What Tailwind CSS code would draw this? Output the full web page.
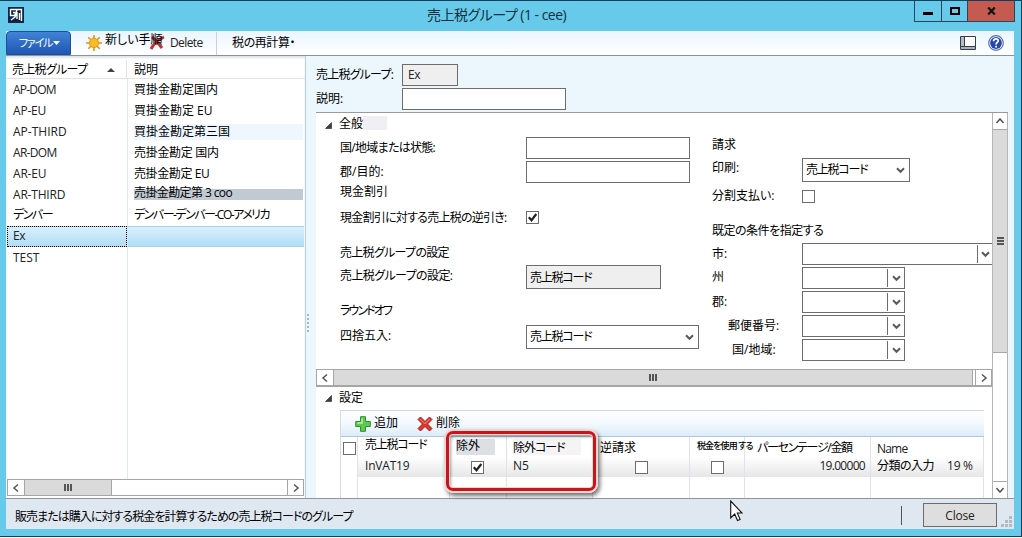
<!DOCTYPE html>
<html lang="ja">

<head>
    <meta charset="UTF-8">
    <meta name="viewport" content="width=device-width, initial-scale=1.0">
    <title>売上税グループ (1 - cee)</title>
    <script src="https://cdn.jsdelivr.net/npm/@tailwindcss/browser@4"></script>
</head>

<body class="w-[1022px] h-[538px] overflow-hidden bg-white text-black text-[12px] leading-[16px] whitespace-nowrap font-['Open_Sans','Noto_Sans_CJK_JP',sans-serif] [font-feature-settings:'palt']">

    <!-- Shared icons -->
    <svg class="hidden">
        <symbol id="drop" viewBox="0 0 9 7"><path d="M1 1.2l3.5 3.6L8 1.2" fill="none" stroke="#5a5a5a" stroke-width="2" /></symbol>
        <symbol id="check" viewBox="0 0 13 13"><path d="M2.8 6.2l2.7 3L10.3 3" fill="none" stroke="#222" stroke-width="2.2" /></symbol>
        <symbol id="left" viewBox="0 0 8 10"><path d="M6 1.5L2 5l4 3.5" fill="none" stroke="#555" stroke-width="1.5" /></symbol>
        <symbol id="right" viewBox="0 0 8 10"><path d="M2 1.5L6 5 2 8.500" fill="none" stroke="#555" stroke-width="1.500" /></symbol>
        <symbol id="fold" viewBox="0 0 7 7"><path d="M6.500 .5v6h-6z" fill="#404040" stroke="#222" stroke-width=".6" /></symbol>
    </svg>

    <div class="relative flex flex-col w-[1022px] h-[537px] bg-[#67caea] border-t border-r border-b border-[#123f5c] pl-[6px] pr-[7px] pb-[7px]">

        <!-- Title bar -->
        <header class="flex h-[30px] shrink-0 items-start">
            <svg class="mt-[6px] ml-[2px] w-4 h-4" viewBox="0 0 16 16">
                <rect width="16" height="16" fill="#0d2647" />
                <path d="M2.500 2.500h11v8M2.500 2v6.500h4L9 3M5 5.500h2M3 13l4-3 2-5v7M11.500 6v7M13.500 10v4" fill="none" stroke="#fff" stroke-width="1.400" />
            </svg>
            <h1 class="ml-[403px] mr-auto mt-[5px] text-[14px] leading-[18px] text-[#12303c] tracking-[-0.5px]">売上税グループ (1 - cee)</h1>
            <div class="flex h-[21px] border border-t-0 border-[#24485a] -mr-px">
                <div class="w-[27px] flex justify-center border-r border-[#24485a]"><span class="mt-[11px] w-[10px] h-[3px] bg-black"></span></div>
                <div class="w-[26px] flex justify-center border-r border-[#24485a]"><span class="mt-[6px] w-[10px] h-[8px] border-2 border-black"></span></div>
                <div class="w-[46px] bg-[#c45a50] flex justify-center">
                    <svg class="mt-[6px] w-[9px] h-[8px]" viewBox="0 0 9 8"><path d="M1.200 .5l6.600 7M7.800 .5l-6.600 7" stroke="#111" stroke-width="2.200" /></svg>
                </div>
            </div>
        </header>

        <!-- Toolbar -->
        <nav class="flex h-[25px] shrink-0 items-center bg-linear-to-b from-[#eaf5fe] to-white border-b border-[#8a929a]">
            <button class="flex items-center justify-center w-[65px] h-[24px] pl-[2px] rounded-t-sm bg-linear-to-b from-[#4183d5] to-[#2056b4] border border-[#1d4f9f] text-white text-[11px] tracking-[-1.2px]">ファイル<svg class="ml-px w-[7px] h-[4px]" viewBox="0 0 7 4"><path d="M0 0h7L3.500 4z" fill="#fff" /></svg></button>
            <svg class="ml-[15px] w-4 h-4" viewBox="0 0 16 16">
                <path d="M8 0v16M0 8h16M2.300 2.300l11.400 11.400M13.700 2.300L2.300 13.700" stroke="#d99518" stroke-width="1.600" />
                <circle cx="8" cy="8" r="4.700" fill="#fbb829" stroke="#e39a14" />
            </svg>
            <span class="relative z-10 ml-[3px] -mt-[7px] w-[60px]">新しい手順</span>
            <svg class="-ml-[16px] w-[17px] h-4" viewBox="0 0 17 16"><path d="M2 14c3-6 7-9 13-12M3 2c4 3 7 7 10 11" fill="none" stroke="#b83a32" stroke-width="3" /></svg>
            <span class="ml-[4px] w-[46px] text-[#222] tracking-[-0.6px]">Delete</span>
            <span class="w-px h-[23px] bg-[#c8d0d8]"></span>
            <span class="ml-[15px] tracking-[-0.4px]">税の再計算・</span>
            <svg class="ml-auto w-4 h-[14px]" viewBox="0 0 16 14">
                <path d="M.5.5h15v13H.5z" fill="#fff" stroke="#333f4c" />
                <path d="M1 1h3v9H1z" fill="#b8bec6" />
                <path d="M4.500 1v9.500M1 10.500h14" stroke="#333f4c" />
                <path d="M1 11h14v2H1z" fill="#a9afb8" />
            </svg>
            <svg class="ml-[12px] mr-[10px] w-4 h-4" viewBox="0 0 16 16">
                <circle cx="8" cy="8" r="7.300" fill="#fff" stroke="#5b6ea8" stroke-width="1.200" />
                <circle cx="8" cy="8" r="5.900" fill="#2448ad" />
                <path d="M5.600 6.200C5.800 3 10.400 3.300 10.200 6 10 7.600 8.100 7.600 8.100 9.400M8.100 10.700v1.800" fill="none" stroke="#fff" stroke-width="1.800" />
            </svg>
        </nav>

        <main class="flex grow min-h-0 bg-[#ebf6fd]">

            <!-- Tax group list -->
            <section class="flex flex-col w-[300px] pl-px bg-white border-r border-[#b9cfdc] shadow-[inset_0_2px_2px_#dfe5ea]">
                <div class="grid grid-cols-[120px_1fr] h-[23px] pt-[4px] shrink-0">
                    <div class="flex items-center justify-between pt-px pl-[5px] pr-[11px] border-r border-b border-[#dde3e8]"><span class="tracking-[-0.7px]">売上税グループ</span><svg class="w-2 h-1" viewBox="0 0 8 4"><path d="M0 4h8L4 0z" fill="#444" /></svg></div>
                    <div class="flex items-center pt-px pl-[7px] border-b border-[#dde3e8]">説明</div>
                </div>
                <div class="relative flex flex-col grow text-[#222]">
                    <div class="grid grid-cols-[120px_1fr] h-[21px] items-center"><span class="pl-[6px] tracking-[-0.8px]">AP-DOM</span><span class="pl-[7px] text-black">買掛金勘定国内</span></div>
                    <div class="grid grid-cols-[120px_1fr] h-[21px] items-center"><span class="pl-[6px] tracking-[-0.2px]">AP-EU</span><span class="pl-[7px] text-black">買掛金勘定 EU</span></div>
                    <div class="grid grid-cols-[120px_1fr] h-[21px] items-center"><span class="pl-[6px]">AP-THIRD</span><span class="ml-[7px] mr-[2px] bg-[#eff6fd] text-black">買掛金勘定第三国</span></div>
                    <div class="grid grid-cols-[120px_1fr] h-[21px] items-center"><span class="pl-[6px] tracking-[-0.7px]">AR-DOM</span><span class="pl-[7px] text-black tracking-[-0.3px]">売掛金勘定 国内</span></div>
                    <div class="grid grid-cols-[120px_1fr] h-[21px] items-center"><span class="pl-[6px] tracking-[-0.2px]">AR-EU</span><span class="pl-[7px] text-black tracking-[-0.4px]">売掛金勘定 EU</span></div>
                    <div class="grid grid-cols-[120px_1fr] h-[21px] items-center"><span class="pl-[6px] tracking-[-0.2px]">AR-THIRD</span><span class="ml-[7px] mr-[2px] h-[11px] leading-[8px] bg-[#c1c9d3] text-black tracking-[-0.6px]">売掛金勘定第 3 coo</span></div>
                    <div class="grid grid-cols-[120px_1fr] h-[21px] items-center pb-[2px] text-black"><span class="pl-[6px] tracking-[-1.5px]">デンバー</span><span class="pl-[7px] tracking-[-1.5px]">デンバー-デンバー-CO-アメリカ</span></div>
                    <div class="grid grid-cols-[120px_1fr] h-[21px] mr-px bg-linear-to-b from-[#d9f0fc] to-[#b0ddf6] border-y border-[#a5d3ea]"><span class="-my-px pl-[5px] pt-px border border-dotted border-black tracking-[-0.5px]">Ex</span><span></span></div>
                    <div class="grid grid-cols-[120px_1fr] h-[21px] items-center"><span class="pl-[6px]">TEST</span><span></span></div>
                    <span class="absolute left-[120px] top-0 bottom-0 w-px bg-[#dce9f2]"></span>
                </div>
                <div class="flex h-[17px] w-[297px] mb-[2px] shrink-0 border border-[#a6a6a6] bg-white">
                    <div class="w-[16px] flex items-center justify-center"><svg class="w-2 h-[10px]"><use href="#left" /></svg></div>
                    <div class="w-[88px] flex items-center justify-center gap-[1px] bg-[#dadada] border-x border-[#a6a6a6]">
                        <i class="w-[2px] h-[7px] bg-[#555]"></i><i class="w-[2px] h-[7px] bg-[#555]"></i><i class="w-[2px] h-[7px] bg-[#555]"></i>
                    </div>
                    <div class="ml-auto w-[16px] flex items-center justify-center border-l border-[#a6a6a6]"><svg class="w-2 h-[10px]"><use href="#right" /></svg></div>
                </div>
            </section>

            <!-- Splitter grip -->
            <div class="flex flex-col w-[10px] items-start pl-px pt-[258px] gap-[2px]">
                <i class="size-[2px] bg-[#a9b4be]"></i><i class="size-[2px] bg-[#a9b4be]"></i><i class="size-[2px] bg-[#a9b4be]"></i><i class="size-[2px] bg-[#a9b4be]"></i><i class="size-[2px] bg-[#a9b4be]"></i>
            </div>

            <section class="flex flex-col w-[692px]">
                <!-- Record header -->
                <div class="flex flex-col h-[56px] shrink-0 pt-[8px] gap-[2px]">
                    <div class="flex h-[22px] items-center"><label class="w-[86px] tracking-[-0.8px]">売上税グループ:</label><div class="w-[56px] h-[22px] px-[5px] leading-[20px] bg-[#efefef] border border-[#6c6c6c] text-[#222] tracking-[-0.5px]">Ex</div></div>
                    <div class="flex h-[22px] items-center"><label class="w-[86px]">説明:</label><div class="w-[164px] h-[22px] bg-white border border-[#6c6c6c]"></div></div>
                </div>

                <div class="flex grow min-h-0 bg-white border-t border-[#9b9b9b]">
                    <div class="flex flex-col w-[676px]">
                        <!-- General tab -->
                        <div class="flex h-[22px] shrink-0 items-center pl-[9px]"><svg class="mt-[3px] w-[7px] h-[7px]"><use href="#fold" /></svg><h2 class="ml-[7px] -mt-[2px] w-[48px] h-[14px] bg-linear-to-r from-white from-50% to-[#efeff5] to-50% leading-[15px]">全般</h2></div>
                        <div class="grid grid-cols-[396px_280px] h-[234px] shrink-0">
                            <div class="flex flex-col pl-[24px] pt-[2px]">
                                <div class="flex h-[24px]"><label class="w-[186px] mt-[3px] tracking-[-0.7px]">国/地域または状態:</label><div class="w-[164px] h-[22px] border border-[#6c6c6c]"></div></div>
                                <div class="flex h-[24px]"><label class="w-[186px] mt-[3px]">郡/目的:</label><div class="w-[164px] h-[22px] border border-[#6c6c6c]"></div></div>
                                <h3 class="h-[12px] leading-[14px]">現金割引</h3>
                                <div class="flex h-[20px] mt-[10px] items-center"><label class="w-[186px] pt-px tracking-[-0.75px]">現金割引に対する売上税の逆引き:</label><div class="size-[13px] border border-[#6c6c6c]"><svg class="-m-px size-[13px]"><use href="#check" /></svg></div></div>
                                <h3 class="h-[20px] mt-[15px] leading-[21px] tracking-[-0.7px]">売上税グループの設定</h3>
                                <div class="flex h-[24px] mt-[3px]"><label class="w-[186px] mt-[3px] tracking-[-0.6px]">売上税グループの設定:</label><div class="w-[135px] h-[24px] px-[3px] leading-[23px] bg-[#efefef] border border-[#6c6c6c] tracking-[-1.2px]">売上税コード</div></div>
                                <h3 class="h-[20px] mt-[12px] leading-[20px] tracking-[-1.9px]">ラウンドオフ</h3>
                                <div class="flex h-[24px] mt-[4px]"><label class="w-[186px] mt-[3px]">四捨五入:</label><div class="flex items-center justify-between w-[173px] h-[24px] pl-[3px] pr-[4px] border border-[#6c6c6c] tracking-[-1.2px]">売上税コード<svg class="w-[9px] h-[7px]"><use href="#drop" /></svg></div></div>
                            </div>
                            <div class="flex flex-col">
                                <h3 class="h-[20px] leading-[20px]">請求</h3>
                                <div class="flex h-[24px] mt-[3px]"><label class="w-[90px] mt-[2px]">印刷:</label><div class="flex items-center justify-between w-[108px] h-[24px] pl-[3px] pr-[4px] border border-[#6c6c6c] tracking-[-1.2px]">売上税コード<svg class="w-[9px] h-[7px]"><use href="#drop" /></svg></div></div>
                                <div class="flex h-[20px] mt-[4px] items-center"><label class="w-[90px]">分割支払い:</label><div class="size-[13px] border border-[#6c6c6c]"></div></div>
                                <h3 class="h-[20px] mt-[14px] leading-[21px] tracking-[-0.5px]">既定の条件を指定する</h3>
                                <div class="flex h-[24px] mt-[3px]"><label class="w-[90px] mt-[3px]">市:</label><div class="flex w-[190px] h-[22px] py-px border border-r-0 border-[#6c6c6c]"><div class="ml-auto w-[15px] flex items-center justify-center border-l border-[#6c6c6c]"><svg class="w-[9px] h-[7px]"><use href="#drop" /></svg></div></div></div>
                                <div class="flex h-[24px]"><label class="w-[90px] mt-[2px]">州</label><div class="flex w-[103px] h-[22px] py-px border border-[#6c6c6c]"><div class="ml-auto w-[17px] flex items-center justify-center border-l border-[#6c6c6c]"><svg class="w-[9px] h-[7px]"><use href="#drop" /></svg></div></div></div>
                                <div class="flex h-[24px]"><label class="w-[90px] mt-[3px]">郡:</label><div class="flex w-[103px] h-[22px] py-px border border-[#6c6c6c]"><div class="ml-auto w-[17px] flex items-center justify-center border-l border-[#6c6c6c]"><svg class="w-[9px] h-[7px]"><use href="#drop" /></svg></div></div></div>
                                <div class="flex h-[24px]"><label class="w-[90px] pl-[16px] mt-[3px]">郵便番号:</label><div class="flex w-[103px] h-[22px] py-px border border-[#6c6c6c]"><div class="ml-auto w-[17px] flex items-center justify-center border-l border-[#6c6c6c]"><svg class="w-[9px] h-[7px]"><use href="#drop" /></svg></div></div></div>
                                <div class="flex h-[24px]"><label class="w-[90px] pl-[20px] mt-[3px]">国/地域:</label><div class="flex w-[103px] h-[22px] py-px border border-[#6c6c6c]"><div class="ml-auto w-[17px] flex items-center justify-center border-l border-[#6c6c6c]"><svg class="w-[9px] h-[7px]"><use href="#drop" /></svg></div></div></div>
                            </div>
                        </div>
                        <div class="flex h-[18px] shrink-0 border border-b-2 border-[#a6a6a6]">
                            <div class="w-[16px] flex items-center justify-center"><svg class="w-2 h-[10px]"><use href="#left" /></svg></div>
                            <div class="grow flex items-center justify-center gap-[1px] bg-[#dadada] border-x border-[#a6a6a6]">
                                <i class="w-[2px] h-[7px] bg-[#555]"></i><i class="w-[2px] h-[7px] bg-[#555]"></i><i class="w-[2px] h-[7px] bg-[#555]"></i>
                            </div>
                            <div class="ml-[2px] w-[16px] flex items-center justify-center border-l border-[#a6a6a6]"><svg class="w-2 h-[10px]"><use href="#right" /></svg></div>
                        </div>

                        <!-- Setup tab -->
                        <div class="flex h-[23px] shrink-0 items-center pl-[9px]"><svg class="w-[7px] h-[7px]"><use href="#fold" /></svg><h2 class="ml-[7px] -mt-px">設定</h2></div>
                        <div class="flex flex-col grow min-h-0 ml-[24px] w-[644px] border-l border-t border-[#d3dce5]">
                            <div class="flex h-[26px] shrink-0 items-center pl-[14px] bg-linear-to-b from-white via-[#f3f9fe] to-[#dcecf9] border-b border-[#b7c6d4]">
                                <svg class="w-4 h-4" viewBox="0 0 16 16"><path d="M5.500.7h5v4.800h4.800v5h-4.800v4.800h-5v-4.800H.7v-5h4.800z" fill="#5fca51" stroke="#2f9030" /><path d="M7 2.500v4.500H2.500" fill="none" stroke="#b4efa5" stroke-width="1.500" /></svg>
                                <span class="ml-[3px] -mt-[2px] w-[43px]">追加</span>
                                <svg class="w-4 h-4" viewBox="0 0 16 16"><path d="M1 3.500L3.500 1 8 5.500 12.500 1 15 3.500 10.500 8l4.500 4.500-2.500 2.500L8 10.500 3.500 15 1 12.500 5.500 8z" fill="#e0352b" stroke="#a81d18" stroke-linejoin="round" /><path d="M3 3.200l5 4.500 4.700-4.600" fill="none" stroke="#f58b80" /></svg>
                                <span class="ml-[3px] -mt-[2px]">削除</span>
                            </div>
                            <div class="relative grid grid-cols-[17px_92px_57px_86px_97px_55px_126px_113px] grid-rows-[20px_20px_1fr] grow min-h-0 divide-x divide-[#dde3e8]">
                                <div class="flex items-center justify-center bg-white"><span class="mt-[2px] ml-px shrink-0 size-[13px] border border-[#6c6c6c]"></span></div>
                                <div class="pl-[7px] tracking-[-1.2px]">売上税コード</div>
                                <div class="pl-[6px]"><span class="block mt-[2px] w-[39px] h-[16px] bg-[#dcdfe3] leading-[13px]">除外</span></div>
                                <div class="pl-[6px]"><span class="block mt-[2px] w-[68px] h-[16px] bg-[#f5f3f4] leading-[17px] tracking-[-1px]">除外コード</span></div>
                                <div class="pl-[7px] pt-[3px]">逆請求</div>
                                <div class="relative z-10 pl-[7px] pt-px text-[9px] leading-[16px] font-medium tracking-[-0.9px]">税金を使用 する</div>
                                <div class="relative pl-[12px] pt-[3px] tracking-[-1.3px]">パーセンテージ/金額</div>
                                <div class="pl-[6px] pt-[4px] text-[#222] tracking-[-0.8px]">Name</div>

                                <div></div>
                                <div class="pl-[7px] leading-[18px] bg-linear-to-b from-white to-[#e6e6e6] text-[#222] tracking-[-0.2px]">InVAT19</div>
                                <div class="flex items-center bg-linear-to-b from-white to-[#e6e6e6] pl-[21px]"><span class="size-[13px] border border-[#6c6c6c] bg-white"><svg class="-m-px size-[13px]"><use href="#check" /></svg></span></div>
                                <div class="pl-[6px] leading-[18px] bg-linear-to-b from-white to-[#e6e6e6] text-[#222]">N5</div>
                                <div class="flex items-center bg-linear-to-b from-white to-[#e6e6e6] pl-[42px]"><span class="size-[13px] border border-[#6c6c6c] bg-white"></span></div>
                                <div class="flex items-center bg-linear-to-b from-white to-[#e6e6e6] pl-[21px]"><span class="size-[13px] border border-[#6c6c6c] bg-white"></span></div>
                                <div class="pr-[5px] leading-[18px] text-right bg-linear-to-b from-white to-[#e6e6e6] text-[#222] tracking-[-0.7px]">19.00000</div>
                                <div class="pl-[6px] leading-[18px] bg-linear-to-b from-white to-[#e6e6e6] tracking-[-0.5px]">分類の入力<span class="ml-[13px] text-[#222] tracking-[-0.3px]">19 %</span></div>

                                <div></div><div></div><div></div><div></div><div></div><div></div><div></div><div></div>

                                <!-- Callout around the exempt columns -->
                                <div class="absolute z-20 left-[103px] top-[-8px] w-[154px] h-[64px] rounded-[9px] border-2 border-[#f6d3cf] shadow-[2px_3px_4px_rgba(0,0,0,0.55)]">
                                    <div class="w-full h-full rounded-[7px] border-3 border-[#c4161c] shadow-[inset_0_0_0_1px_#f6d3cf,inset_2px_3px_3px_rgba(0,0,0,0.35)]"></div>
                                </div>
                            </div>
                        </div>
                    </div>

                    <!-- Vertical scrollbar -->
                    <div class="flex flex-col w-[16px] border-x border-[#b5b5b5]">
                        <div class="h-[17px] flex items-center justify-center border-b border-[#a6a6a6]"><svg class="w-2 h-[10px] rotate-90"><use href="#left" /></svg></div>
                        <div class="h-[223px] flex flex-col items-center justify-center gap-px bg-[#dadada] border-b border-[#a6a6a6]">
                            <i class="w-[7px] h-[2px] bg-[#555]"></i><i class="w-[7px] h-[2px] bg-[#555]"></i><i class="w-[7px] h-[2px] bg-[#555]"></i>
                        </div>
                        <div class="mt-auto h-[17px] flex items-center justify-center border-t border-[#a6a6a6]"><svg class="w-2 h-[10px] rotate-90"><use href="#right" /></svg></div>
                    </div>
                </div>
            </section>
        </main>

        <!-- Status bar -->
        <footer class="flex h-[31px] shrink-0 items-center pl-[9px] bg-[#dfe8f1] border-t border-[#8d959d]">
            <span class="mt-[5px] tracking-[-0.95px]">販売または購入に対する税金を計算するための売上税コードのグループ</span>
            <span class="ml-auto mt-[2px] w-px h-[19px] bg-[#4a5560]"></span>
            <button class="ml-[21px] mt-[2px] w-[74px] h-[24px] pt-px bg-[#dedede] border border-[#6c6c6c] text-[#222] tracking-[-0.2px]">Close</button>
            <svg class="ml-[4px] mr-[2px] mt-[14px] w-[11px] h-[11px]" viewBox="0 0 11 11"><path d="M8 0h3v3H8zM4 4h3v3H4zM8 4h3v3H8zM0 8h3v3H0zM4 8h3v3H4zM8 8h3v3H8z" fill="#b3bac1" /></svg>
        </footer>

        <!-- Mouse pointer -->
        <svg class="absolute left-[730px] top-[499px] w-[13px] h-[22px]" viewBox="0 0 13 22"><path d="M.7 1v17l4-4 2.800 6.500 2.600-1.100L7.300 13H12z" fill="#fff" stroke="#111" stroke-width="1.100" /></svg>
    </div>

</body>

</html>
